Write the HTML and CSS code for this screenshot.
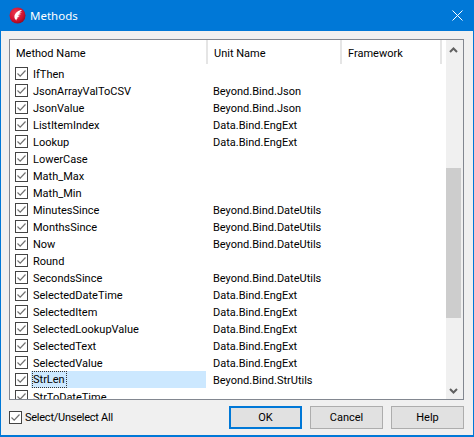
FILE: index.html
```html
<!DOCTYPE html>
<html lang="en">
<head>
    <meta charset="UTF-8">
    <title>Methods</title>
    <link rel="stylesheet" href="styles.css">
</head>
<body>
    <svg class="defs" width="0" height="0">
        <symbol id="check" viewBox="0 0 13 13">
            <rect x="0.5" y="0.5" width="12" height="12" fill="#fff" stroke="#444"/>
            <path d="M2.5 6.5 L5.2 9.2 L10.5 3.5" fill="none" stroke="#707070" stroke-width="1.2"/>
        </symbol>
        <radialGradient id="ball" cx="0.4" cy="0.35" r="0.7">
            <stop offset="0" stop-color="#ee3a50"/>
            <stop offset="0.65" stop-color="#cf1230"/>
            <stop offset="1" stop-color="#8e0b20"/>
        </radialGradient>
    </svg>
    <div class="window">
        <div class="titlebar">
            <svg class="app-icon" viewBox="0 0 17 17">
                <circle cx="8.5" cy="8.5" r="8" fill="url(#ball)"/>
                <path d="M13 3 C9.5 3 6.5 5.5 5.5 8.5 C5 10.5 6 12.5 7.5 13.5 C7.3 12.3 7.8 11.5 9 11 L8 10.2 L10.8 10 L8.6 8.8 L12 7.8 L9.4 7.2 L13 5.4 L10.4 5.4 Z" fill="#fff"/>
            </svg>
            <span class="title">Methods</span>
            <svg class="close" viewBox="0 0 11 11">
                <path d="M0.5 0.5 L10.5 10.5 M10.5 0.5 L0.5 10.5" stroke="#fff" stroke-width="1"/>
            </svg>
        </div>
        <div class="content">
            <div class="list">
                <div class="list-main">
                    <div class="list-header">
                        <div class="col col-name">Method Name</div>
                        <div class="col col-unit">Unit Name</div>
                        <div class="col col-fw">Framework</div>
                    </div>
                    <div class="rows">
                        <div class="row"><svg class="box"><use href="#check"/></svg><span class="name">IfThen</span><span class="unit"></span></div>
                        <div class="row"><svg class="box"><use href="#check"/></svg><span class="name">JsonArrayValToCSV</span><span class="unit">Beyond.Bind.Json</span></div>
                        <div class="row"><svg class="box"><use href="#check"/></svg><span class="name">JsonValue</span><span class="unit">Beyond.Bind.Json</span></div>
                        <div class="row"><svg class="box"><use href="#check"/></svg><span class="name">ListItemIndex</span><span class="unit">Data.Bind.EngExt</span></div>
                        <div class="row"><svg class="box"><use href="#check"/></svg><span class="name">Lookup</span><span class="unit">Data.Bind.EngExt</span></div>
                        <div class="row"><svg class="box"><use href="#check"/></svg><span class="name">LowerCase</span><span class="unit"></span></div>
                        <div class="row"><svg class="box"><use href="#check"/></svg><span class="name">Math_Max</span><span class="unit"></span></div>
                        <div class="row"><svg class="box"><use href="#check"/></svg><span class="name">Math_Min</span><span class="unit"></span></div>
                        <div class="row"><svg class="box"><use href="#check"/></svg><span class="name">MinutesSince</span><span class="unit">Beyond.Bind.DateUtils</span></div>
                        <div class="row"><svg class="box"><use href="#check"/></svg><span class="name">MonthsSince</span><span class="unit">Beyond.Bind.DateUtils</span></div>
                        <div class="row"><svg class="box"><use href="#check"/></svg><span class="name">Now</span><span class="unit">Beyond.Bind.DateUtils</span></div>
                        <div class="row"><svg class="box"><use href="#check"/></svg><span class="name">Round</span><span class="unit"></span></div>
                        <div class="row"><svg class="box"><use href="#check"/></svg><span class="name">SecondsSince</span><span class="unit">Beyond.Bind.DateUtils</span></div>
                        <div class="row"><svg class="box"><use href="#check"/></svg><span class="name">SelectedDateTime</span><span class="unit">Data.Bind.EngExt</span></div>
                        <div class="row"><svg class="box"><use href="#check"/></svg><span class="name">SelectedItem</span><span class="unit">Data.Bind.EngExt</span></div>
                        <div class="row"><svg class="box"><use href="#check"/></svg><span class="name">SelectedLookupValue</span><span class="unit">Data.Bind.EngExt</span></div>
                        <div class="row"><svg class="box"><use href="#check"/></svg><span class="name">SelectedText</span><span class="unit">Data.Bind.EngExt</span></div>
                        <div class="row"><svg class="box"><use href="#check"/></svg><span class="name">SelectedValue</span><span class="unit">Data.Bind.EngExt</span></div>
                        <div class="row row-selected"><svg class="box"><use href="#check"/></svg><span class="name"><span class="focus">StrLen</span></span><span class="unit">Beyond.Bind.StrUtils</span></div>
                        <div class="row"><svg class="box"><use href="#check"/></svg><span class="name">StrToDateTime</span><span class="unit"></span></div>
                    </div>
                </div>
                <div class="scrollbar">
                    <svg class="arrow" viewBox="0 0 9 6"><path d="M1 5 L4.5 1.5 L8 5" fill="none" stroke="#606060" stroke-width="2"/></svg>
                    <div class="track"><div class="thumb"></div></div>
                    <svg class="arrow" viewBox="0 0 9 6"><path d="M1 1 L4.5 4.5 L8 1" fill="none" stroke="#606060" stroke-width="2"/></svg>
                </div>
            </div>
            <div class="footer">
                <label class="select-all"><svg class="box"><use href="#check"/></svg>Select/Unselect All</label>
                <div class="buttons">
                    <button class="btn btn-default">OK</button>
                    <button class="btn">Cancel</button>
                    <button class="btn">Help</button>
                </div>
            </div>
        </div>
    </div>
</body>
</html>
```
FILE: styles.css
```css
* {
    box-sizing: border-box;
}

body {
    margin: 0;
    background: #f0f0f0;
    color: #000;
    font-family: "Roboto", sans-serif;
    font-size: 11px;
}

.defs {
    display: block;
    height: 0;
}

.window {
    display: flex;
    flex-direction: column;
    width: 474px;
    height: 437px;
    border: 1px solid #0078d7;
    border-width: 0 1px 2px 1px;
    background: #f0f0f0;
}

.titlebar {
    display: flex;
    align-items: center;
    height: 31px;
    margin: 0 -1px;
    padding: 0 11px 0 9px;
    background: #0078d7;
    color: #fff;
    font-family: "Noto Sans", sans-serif;
    font-size: 11.5px;
}

.app-icon {
    width: 17px;
    height: 17px;
}

.title {
    flex: 1;
    margin-left: 4px;
}

.close {
    width: 11px;
    height: 11px;
}

.content {
    flex: 1;
    display: flex;
    flex-direction: column;
    padding: 8px 9px 6px 8px;
}

.list {
    display: flex;
    height: 361px;
    background: #fff;
    border: 1px solid #828790;
    overflow: hidden;
}

.list-main {
    flex: 1;
    min-width: 0;
}

.list-header {
    display: flex;
    height: 25px;
}

.col {
    display: flex;
    align-items: center;
    height: 24px;
    padding: 2px 0 0 6px;
    border-right: 2px solid #e5e5e5;
}

.col-name {
    width: 198px;
}

.col-unit {
    width: 134px;
}

.col-fw {
    width: 100px;
}

.row {
    display: flex;
    align-items: center;
    height: 17px;
    padding-left: 5px;
}

.box {
    flex: none;
    width: 13px;
    height: 13px;
}

.name {
    display: flex;
    align-items: center;
    width: 175px;
    height: 17px;
    margin-left: 3px;
    padding: 1px 0 0 2px;
    margin-right: 1px;
}

.unit {
    margin-left: 6px;
    padding-top: 1px;
}

.row-selected .name {
    padding-top: 0;
    background: #cce8ff;
}

.focus {
    height: 17px;
    padding-right: 1px;
    border: 1px dotted #333;
    margin-left: -1px;
    line-height: 16px;
}

.scrollbar {
    display: flex;
    flex-direction: column;
    align-items: center;
    flex: none;
    width: 17px;
    background: #f0f0f0;
}

.arrow {
    flex: none;
    width: 9px;
    height: 6px;
    margin: 7px 2px 5px 0;
}

.track {
    flex: 1;
    width: 100%;
    padding-top: 110px;
}

.thumb {
    width: 15px;
    height: 150px;
    background: #cdcdcd;
}

.footer {
    display: flex;
    align-items: center;
    justify-content: space-between;
    flex: 1;
    padding-top: 6px;
}

.select-all {
    display: flex;
    align-items: center;
    gap: 3px;
    letter-spacing: -0.25px;
}

.buttons {
    display: flex;
    gap: 8px;
}

.btn {
    width: 73px;
    height: 23px;
    padding: 0;
    background: #e1e1e1;
    border: 1px solid #adadad;
    font: inherit;
    color: #000;
}

.btn-default {
    border: 2px solid #0078d7;
}
```
